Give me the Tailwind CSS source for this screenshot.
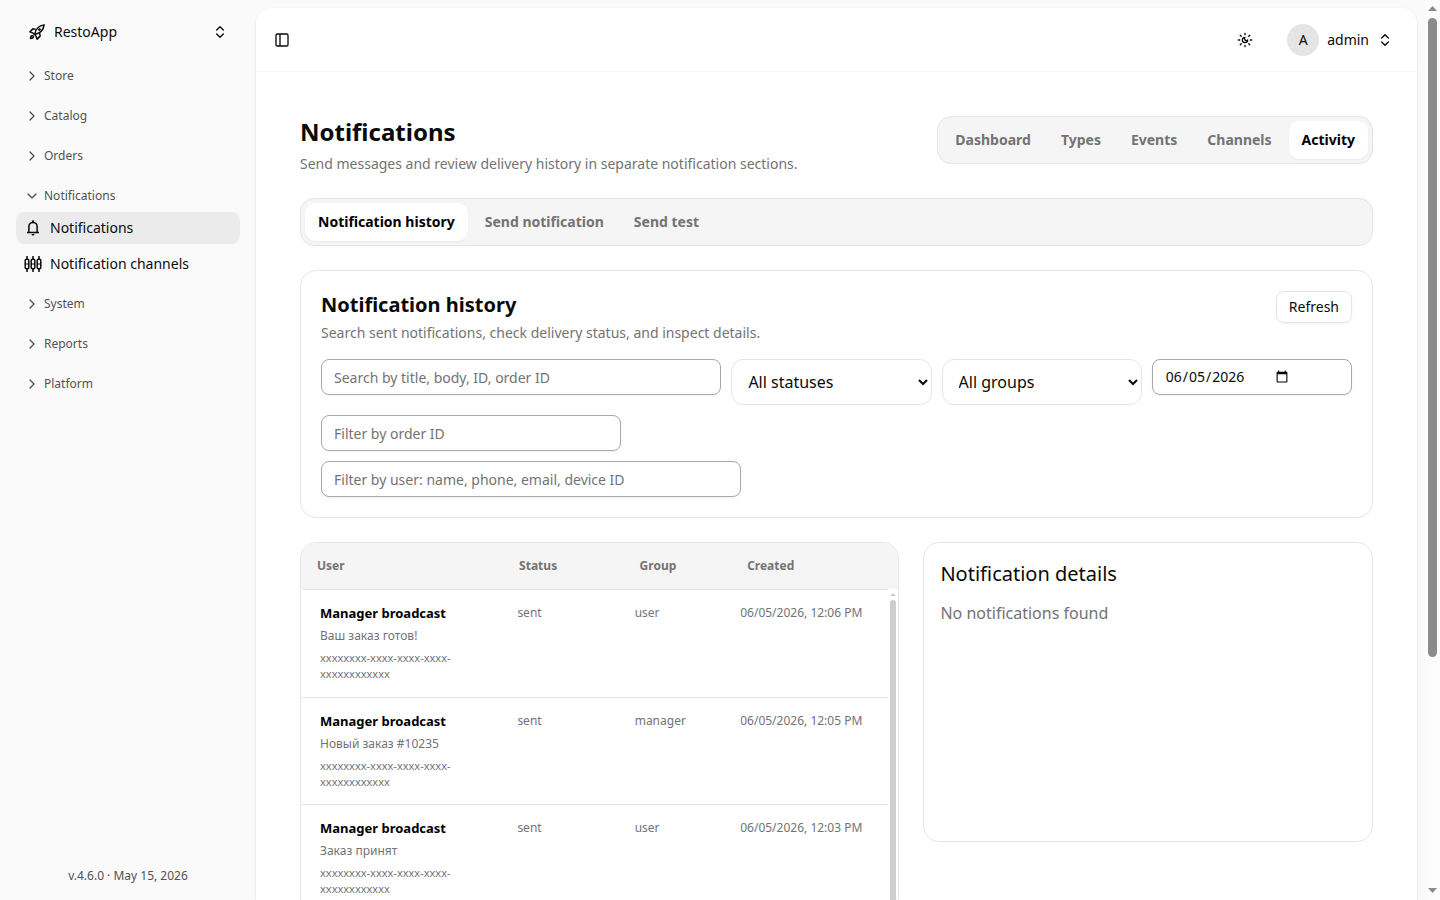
<!DOCTYPE html>
<html lang="en">
<head>
<meta charset="utf-8">
<meta name="viewport" content="width=device-width, initial-scale=1">
<title>Notifications · RestoApp</title>
<script src="https://cdn.jsdelivr.net/npm/@tailwindcss/browser@4"></script>
</head>
<body class="flex h-screen overflow-hidden bg-neutral-50 font-['Noto_Sans',sans-serif] text-sm text-neutral-950">

<svg class="hidden" aria-hidden="true">
  <symbol id="chev-right" viewBox="0 0 24 24" fill="none" stroke="currentColor" stroke-width="2" stroke-linecap="round" stroke-linejoin="round"><path d="m9 18 6-6-6-6"/></symbol>
  <symbol id="chev-down" viewBox="0 0 24 24" fill="none" stroke="currentColor" stroke-width="2" stroke-linecap="round" stroke-linejoin="round"><path d="m6 9 6 6 6-6"/></symbol>
  <symbol id="chev-updown" viewBox="0 0 24 24" fill="none" stroke="currentColor" stroke-width="2" stroke-linecap="round" stroke-linejoin="round"><path d="m7 15 5 5 5-5M7 9l5-5 5 5"/></symbol>
</svg>

<aside class="flex w-64 shrink-0 flex-col">
  <button class="mx-4 mt-4 flex h-8 items-center gap-2 px-3 text-left">
    <svg class="size-[18px]" viewBox="0 0 24 24" fill="none" stroke="currentColor" stroke-width="2" stroke-linejoin="round"><path d="M9 15 C10 9 14 3.500 21.500 2.500 C20.500 10 15 14 9 15Z"/><path d="M10.500 8.500 L6.500 7.800 L2.500 11.800 L7 13.500 M15.500 13.500 L16.200 17.500 L12.200 21.500 L10.500 17 M7 13.500 L10.500 17"/><circle cx="15.300" cy="8.700" r="1.800" fill="currentColor" stroke="none"/><path d="M6.800 17.200 C5.500 16 3.500 17 3.300 20.700 C7 20.500 8 18.500 6.800 17.200Z"/></svg>
    <span class="flex-1">RestoApp</span>
    <svg class="size-4"><use href="#chev-updown"/></svg>
  </button>
  <nav class="mt-3 flex flex-1 flex-col gap-2 px-4 text-xs text-neutral-600" aria-label="Main">
    <button class="flex h-8 items-center gap-1 px-2"><svg class="size-4"><use href="#chev-right"/></svg>Store</button>
    <button class="flex h-8 items-center gap-1 px-2"><svg class="size-4"><use href="#chev-right"/></svg>Catalog</button>
    <button class="flex h-8 items-center gap-1 px-2"><svg class="size-4"><use href="#chev-right"/></svg>Orders</button>
    <div>
      <button class="flex h-8 w-full items-center gap-1 px-2"><svg class="size-4"><use href="#chev-down"/></svg>Notifications</button>
      <div class="flex flex-col gap-1 text-sm text-neutral-950">
        <a href="#notifications" class="flex h-8 items-center gap-2 rounded-lg bg-[#ebebeb] px-2">
          <svg class="size-[18px]" viewBox="0 0 24 24" fill="none" stroke="currentColor" stroke-width="2"><path d="M4 18h16M6.500 18v-8a5.500 5.500 0 0 1 11 0v8"/><path d="M12 2v2.500" stroke-width="3"/><path d="M10 20h4a2 2 0 0 1-4 0Z" fill="currentColor" stroke="none"/></svg>
          Notifications
        </a>
        <a href="#channels" class="flex h-8 items-center gap-2 rounded-lg px-2">
          <svg class="size-[18px]" viewBox="0 0 18 18" fill="none" stroke="currentColor" stroke-width="1.500"><path d="M3 1v3M3 14v3M9 1v3M9 14v3M15 1v3M15 14v3"/><path d="M1.200 9h3.600M7.200 9h3.600M13.200 9h3.600" stroke-width="1.200"/><rect x="1.200" y="4.200" width="3.600" height="9.600" rx="1.200"/><rect x="7.200" y="4.200" width="3.600" height="9.600" rx="1.200"/><rect x="13.200" y="4.200" width="3.600" height="9.600" rx="1.200"/></svg>
          Notification channels
        </a>
      </div>
    </div>
    <button class="flex h-8 items-center gap-1 px-2"><svg class="size-4"><use href="#chev-right"/></svg>System</button>
    <button class="flex h-8 items-center gap-1 px-2"><svg class="size-4"><use href="#chev-right"/></svg>Reports</button>
    <button class="flex h-8 items-center gap-1 px-2"><svg class="size-4"><use href="#chev-right"/></svg>Platform</button>
  </nav>
  <p class="pb-4 text-center text-xs text-neutral-600">v.4.6.0 · May 15, 2026</p>
</aside>

<div class="mt-2 mr-2 min-w-0 flex-1 overflow-y-auto rounded-t-2xl bg-white shadow-sm [scrollbar-width:none]">
  <header class="flex h-16 items-center border-b border-neutral-100 pr-6 pl-[18px]">
    <button aria-label="Toggle sidebar"><svg class="size-4" viewBox="0 0 24 24" fill="none" stroke="currentColor" stroke-width="2" stroke-linejoin="round"><rect x="3" y="3" width="18" height="18" rx="2"/><path d="M9 3v18"/></svg></button>
    <button aria-label="Change theme" class="ml-auto"><svg class="size-4" viewBox="0 0 24 24" fill="none" stroke="currentColor" stroke-width="2" stroke-linecap="round" stroke-linejoin="round"><path d="M12 8a2.830 2.830 0 0 0 4 4 4 4 0 1 1-4-4M12 2v2M12 20v2M4.900 4.900l1.400 1.400M17.700 17.700l1.400 1.400M2 12h2M20 12h2M6.300 17.700l-1.400 1.400M19.100 4.900l-1.400 1.400"/></svg></button>
    <button class="ml-[34px] flex items-center gap-2">
      <span class="flex size-8 items-center justify-center rounded-full bg-neutral-200">A</span>
      <span>admin</span>
      <svg class="size-4"><use href="#chev-updown"/></svg>
    </button>
  </header>

  <main class="flex flex-col gap-6 p-11">
    <div class="flex items-start justify-between gap-6">
      <div>
        <h1 class="text-2xl font-bold">Notifications</h1>
        <p class="mt-1.5 text-neutral-500">Send messages and review delivery history in separate notification sections.</p>
      </div>
      <nav class="flex gap-1 rounded-[14px] border border-neutral-200 bg-neutral-100 p-1 font-bold text-neutral-500" aria-label="Sections">
        <a href="#dashboard" class="px-[13px] py-[9px]">Dashboard</a>
        <a href="#types" class="px-[13px] py-[9px]">Types</a>
        <a href="#events" class="px-[13px] py-[9px]">Events</a>
        <a href="#channels" class="px-[13px] py-[9px]">Channels</a>
        <a href="#activity" class="rounded-[10px] bg-white px-[13px] py-[9px] text-black shadow-xs">Activity</a>
      </nav>
    </div>

    <nav class="flex gap-1 rounded-[14px] border border-neutral-200 bg-neutral-100 p-1 font-bold text-neutral-500" aria-label="Activity">
      <a href="#history" class="rounded-[10px] bg-white px-[13px] py-[9px] text-black shadow-xs">Notification history</a>
      <a href="#send" class="px-[13px] py-[9px]">Send notification</a>
      <a href="#test" class="px-[13px] py-[9px]">Send test</a>
    </nav>

    <section class="rounded-2xl border border-neutral-200 p-5">
      <div class="flex items-start justify-between">
        <div>
          <h2 class="text-xl font-bold">Notification history</h2>
          <p class="mt-1 text-neutral-500">Search sent notifications, check delivery status, and inspect details.</p>
        </div>
        <button class="h-8 rounded-lg border border-neutral-200 px-3 shadow-xs">Refresh</button>
      </div>
      <form class="mt-4 flex flex-col gap-2.5">
        <div class="grid grid-cols-[2fr_1fr_1fr_1fr] items-start gap-2.5">
          <input type="search" aria-label="Search" placeholder="Search by title, body, ID, order ID" class="h-9 min-w-0 rounded-lg border border-[#a8a8a8] px-3 shadow-xs placeholder:text-neutral-500">
          <select aria-label="Status" class="h-[46px] min-w-0 rounded-xl border border-neutral-200 bg-white px-3 text-base"><option>All statuses</option></select>
          <select aria-label="Group" class="h-[46px] min-w-0 rounded-xl border border-neutral-200 bg-white px-3 text-base"><option>All groups</option></select>
          <input type="date" aria-label="Date" value="2026-06-05" class="h-9 min-w-0 rounded-lg border border-[#a8a8a8] pr-[60px] pl-3 shadow-xs">
        </div>
        <input type="text" aria-label="Order ID" placeholder="Filter by order ID" class="h-9 w-[300px] rounded-lg border border-[#a8a8a8] px-3 shadow-xs placeholder:text-neutral-500">
        <input type="text" aria-label="User" placeholder="Filter by user: name, phone, email, device ID" class="h-9 w-[420px] rounded-lg border border-[#a8a8a8] px-3 shadow-xs placeholder:text-neutral-500">
      </form>
    </section>

    <div class="grid grid-cols-[4fr_3fr] items-start gap-6">
      <section class="overflow-hidden rounded-2xl border border-neutral-200 text-xs text-neutral-500">
        <table class="w-full table-fixed bg-neutral-100 text-left">
          <thead>
            <tr class="h-[46px]">
              <th class="w-[34%] pl-4">User</th><th class="w-[20%] pl-[15px]">Status</th><th class="w-[18%] pl-4">Group</th><th class="w-[28%] pl-4">Created</th>
            </tr>
          </thead>
        </table>
        <div class="flex">
          <div class="flex-1 pl-px">
            <table class="w-full table-fixed text-left" aria-label="Sent notifications">
              <tbody>
                <tr class="h-[108px] border-t border-neutral-200 align-top">
                  <td class="w-[34%] pt-3 pr-4 pb-3 pl-[18px]"><p class="text-[13px] leading-[22px] font-bold text-black">Manager broadcast</p><p class="leading-6">Ваш заказ готов!</p><p class="pt-0.5 text-[11px] leading-4">xxxxxxxx-xxxx-xxxx-xxxx-xxxxxxxxxxxx</p></td>
                  <td class="w-[20%] pt-[15px] pl-4">sent</td><td class="w-[18%] pt-[15px] pl-4">user</td><td class="w-[28%] pt-[15px] pl-4">06/05/2026, 12:06 PM</td>
                </tr>
                <tr class="h-[107px] border-t border-neutral-200 align-top">
                  <td class="pt-3 pr-4 pb-3 pl-[18px]"><p class="text-[13px] leading-[22px] font-bold text-black">Manager broadcast</p><p class="leading-6">Новый заказ #10235</p><p class="pt-0.5 text-[11px] leading-4">xxxxxxxx-xxxx-xxxx-xxxx-xxxxxxxxxxxx</p></td>
                  <td class="pt-[15px] pl-4">sent</td><td class="pt-[15px] pl-4">manager</td><td class="pt-[15px] pl-4">06/05/2026, 12:05 PM</td>
                </tr>
                <tr class="h-[108px] border-t border-neutral-200 align-top">
                  <td class="pt-3 pr-4 pb-3 pl-[18px]"><p class="text-[13px] leading-[22px] font-bold text-black">Manager broadcast</p><p class="leading-6">Заказ принят</p><p class="pt-0.5 text-[11px] leading-4">xxxxxxxx-xxxx-xxxx-xxxx-xxxxxxxxxxxx</p></td>
                  <td class="pt-[15px] pl-4">sent</td><td class="pt-[15px] pl-4">user</td><td class="pt-[15px] pl-4">06/05/2026, 12:03 PM</td>
                </tr>
              </tbody>
            </table>
          </div>
          <div class="flex w-2.5 flex-col items-center gap-1 pt-1 text-[#cecece]" aria-hidden="true">
            <svg class="h-[3px] w-1.5" viewBox="0 0 6 3"><path d="M0 3h6L3 0Z" fill="currentColor"/></svg>
            <div class="w-1.5 flex-1 rounded-t-full bg-current"></div>
          </div>
        </div>
      </section>

      <section class="min-h-[300px] rounded-2xl border border-neutral-200 p-4">
        <h2 class="text-xl leading-[30px]">Notification details</h2>
        <p class="mt-3 text-base text-neutral-500">No notifications found</p>
      </section>
    </div>
  </main>
</div>

<div class="flex w-[15px] shrink-0 flex-col items-center justify-between bg-[#fcfcfc] pt-1.5 pb-[7px] text-[#8b8b8b]" aria-hidden="true">
  <svg class="h-[5px] w-[9px]" viewBox="0 0 9 5"><path d="M0 5h9L4.500 0Z" fill="currentColor"/></svg>
  <div class="my-[7px] flex-1"><div class="h-[74%] w-[9px] rounded-full bg-current"></div></div>
  <svg class="h-[5px] w-[9px]" viewBox="0 0 9 5"><path d="M0 0h9L4.500 5Z" fill="currentColor"/></svg>
</div>
</body>
</html>
